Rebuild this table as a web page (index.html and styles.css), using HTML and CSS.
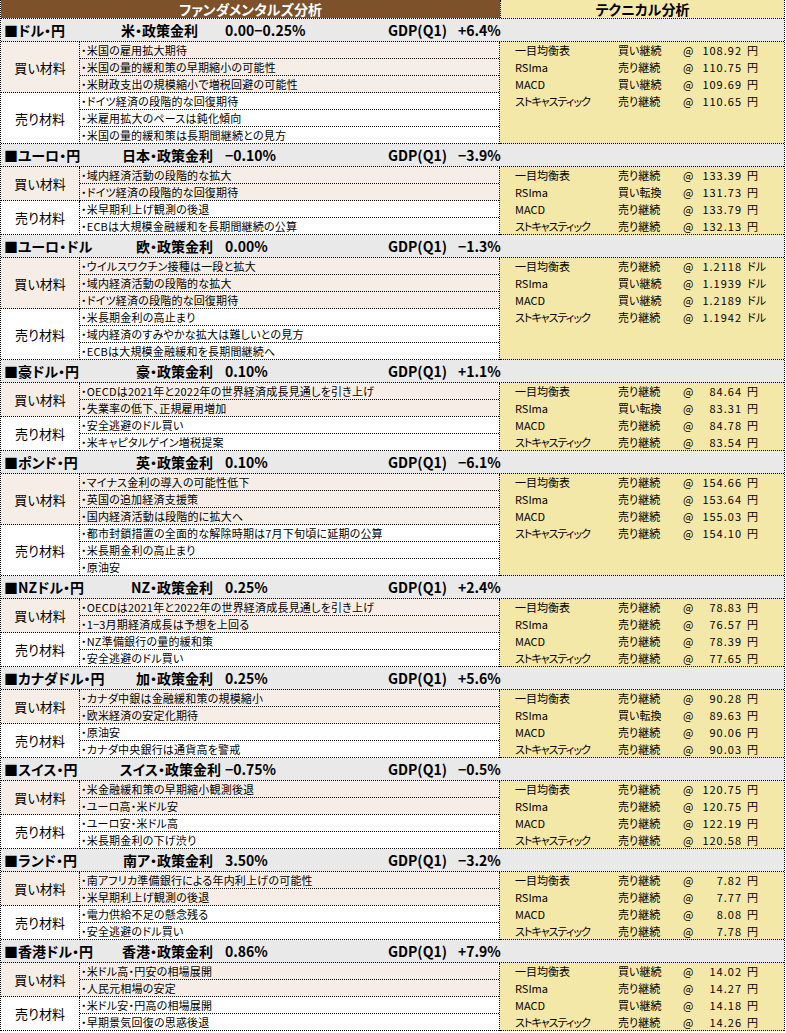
FILE: index.html
```html
<!DOCTYPE html>
<html lang="ja">
<head>
<meta charset="utf-8">
<title>ファンダメンタルズ分析</title>
<link rel="stylesheet" href="styles.css">
</head>
<body>
<div class="sheet">
  <div class="title">
    <div class="t-fund">ファンダメンタルズ分析</div>
    <div class="t-tech">テクニカル分析</div>
  </div>

  <section class="pair">
    <div class="phead"><span class="pname">■ドル・円</span><span class="rlabel rlabel-short">米・政策金利</span><span class="rate">0.00−0.25%</span><span class="gdp">GDP(Q1)</span><span class="gdpv">+6.4%</span></div>
    <div class="pbody">
      <div class="fund">
        <div class="grp buy"><div class="glabel">買い材料</div><div class="items">
          <div class="item">・米国の雇用拡大期待</div>
          <div class="item">・米国の量的緩和策の早期縮小の可能性</div>
          <div class="item">・米財政支出の規模縮小で増税回避の可能性</div>
        </div></div>
        <div class="grp sell"><div class="glabel">売り材料</div><div class="items">
          <div class="item">・ドイツ経済の段階的な回復期待</div>
          <div class="item">・米雇用拡大のペースは鈍化傾向</div>
          <div class="item">・米国の量的緩和策は長期間継続との見方</div>
        </div></div>
      </div>
      <div class="tech">
        <div class="trow"><span>一目均衡表</span><span>買い継続</span><span>@</span><span class="tval">108.92</span><span class="tunit">円</span></div>
        <div class="trow"><span>RSIma</span><span>売り継続</span><span>@</span><span class="tval">110.75</span><span class="tunit">円</span></div>
        <div class="trow"><span>MACD</span><span>買い継続</span><span>@</span><span class="tval">109.69</span><span class="tunit">円</span></div>
        <div class="trow"><span class="kana">ストキャスティック</span><span>売り継続</span><span>@</span><span class="tval">110.65</span><span class="tunit">円</span></div>
      </div>
    </div>
  </section>

  <section class="pair">
    <div class="phead"><span class="pname">■ユーロ・円</span><span class="rlabel">日本・政策金利</span><span class="rate">−0.10%</span><span class="gdp">GDP(Q1)</span><span class="gdpv">−3.9%</span></div>
    <div class="pbody">
      <div class="fund">
        <div class="grp buy"><div class="glabel">買い材料</div><div class="items">
          <div class="item">・域内経済活動の段階的な拡大</div>
          <div class="item">・ドイツ経済の段階的な回復期待</div>
        </div></div>
        <div class="grp sell"><div class="glabel">売り材料</div><div class="items">
          <div class="item">・米早期利上げ観測の後退</div>
          <div class="item">・ECBは大規模金融緩和を長期間継続の公算</div>
        </div></div>
      </div>
      <div class="tech">
        <div class="trow"><span>一目均衡表</span><span>売り継続</span><span>@</span><span class="tval">133.39</span><span class="tunit">円</span></div>
        <div class="trow"><span>RSIma</span><span>買い転換</span><span>@</span><span class="tval">131.73</span><span class="tunit">円</span></div>
        <div class="trow"><span>MACD</span><span>売り継続</span><span>@</span><span class="tval">133.79</span><span class="tunit">円</span></div>
        <div class="trow"><span class="kana">ストキャスティック</span><span>売り継続</span><span>@</span><span class="tval">132.13</span><span class="tunit">円</span></div>
      </div>
    </div>
  </section>

  <section class="pair">
    <div class="phead"><span class="pname">■ユーロ・ドル</span><span class="rlabel">欧・政策金利</span><span class="rate">0.00%</span><span class="gdp">GDP(Q1)</span><span class="gdpv">−1.3%</span></div>
    <div class="pbody">
      <div class="fund">
        <div class="grp buy"><div class="glabel">買い材料</div><div class="items">
          <div class="item">・ウイルスワクチン接種は一段と拡大</div>
          <div class="item">・域内経済活動の段階的な拡大</div>
          <div class="item">・ドイツ経済の段階的な回復期待</div>
        </div></div>
        <div class="grp sell"><div class="glabel">売り材料</div><div class="items">
          <div class="item">・米長期金利の高止まり</div>
          <div class="item">・域内経済のすみやかな拡大は難しいとの見方</div>
          <div class="item">・ECBは大規模金融緩和を長期間継続へ</div>
        </div></div>
      </div>
      <div class="tech">
        <div class="trow"><span>一目均衡表</span><span>売り継続</span><span>@</span><span class="tval">1.2118</span><span class="tunit">ドル</span></div>
        <div class="trow"><span>RSIma</span><span>買い継続</span><span>@</span><span class="tval">1.1939</span><span class="tunit">ドル</span></div>
        <div class="trow"><span>MACD</span><span>買い継続</span><span>@</span><span class="tval">1.2189</span><span class="tunit">ドル</span></div>
        <div class="trow"><span class="kana">ストキャスティック</span><span>売り継続</span><span>@</span><span class="tval">1.1942</span><span class="tunit">ドル</span></div>
      </div>
    </div>
  </section>

  <section class="pair">
    <div class="phead"><span class="pname">■豪ドル・円</span><span class="rlabel">豪・政策金利</span><span class="rate">0.10%</span><span class="gdp">GDP(Q1)</span><span class="gdpv">+1.1%</span></div>
    <div class="pbody">
      <div class="fund">
        <div class="grp buy"><div class="glabel">買い材料</div><div class="items">
          <div class="item">・OECDは2021年と2022年の世界経済成長見通しを引き上げ</div>
          <div class="item">・失業率の低下、正規雇用増加</div>
        </div></div>
        <div class="grp sell"><div class="glabel">売り材料</div><div class="items">
          <div class="item">・安全逃避のドル買い</div>
          <div class="item">・米キャピタルゲイン増税提案</div>
        </div></div>
      </div>
      <div class="tech">
        <div class="trow"><span>一目均衡表</span><span>売り継続</span><span>@</span><span class="tval">84.64</span><span class="tunit">円</span></div>
        <div class="trow"><span>RSIma</span><span>買い転換</span><span>@</span><span class="tval">83.31</span><span class="tunit">円</span></div>
        <div class="trow"><span>MACD</span><span>売り継続</span><span>@</span><span class="tval">84.78</span><span class="tunit">円</span></div>
        <div class="trow"><span class="kana">ストキャスティック</span><span>売り継続</span><span>@</span><span class="tval">83.54</span><span class="tunit">円</span></div>
      </div>
    </div>
  </section>

  <section class="pair">
    <div class="phead"><span class="pname">■ポンド・円</span><span class="rlabel">英・政策金利</span><span class="rate">0.10%</span><span class="gdp">GDP(Q1)</span><span class="gdpv">−6.1%</span></div>
    <div class="pbody">
      <div class="fund">
        <div class="grp buy"><div class="glabel">買い材料</div><div class="items">
          <div class="item">・マイナス金利の導入の可能性低下</div>
          <div class="item">・英国の追加経済支援策</div>
          <div class="item">・国内経済活動は段階的に拡大へ</div>
        </div></div>
        <div class="grp sell"><div class="glabel">売り材料</div><div class="items">
          <div class="item">・都市封鎖措置の全面的な解除時期は7月下旬頃に延期の公算</div>
          <div class="item">・米長期金利の高止まり</div>
          <div class="item">・原油安</div>
        </div></div>
      </div>
      <div class="tech">
        <div class="trow"><span>一目均衡表</span><span>売り継続</span><span>@</span><span class="tval">154.66</span><span class="tunit">円</span></div>
        <div class="trow"><span>RSIma</span><span>売り継続</span><span>@</span><span class="tval">153.64</span><span class="tunit">円</span></div>
        <div class="trow"><span>MACD</span><span>売り継続</span><span>@</span><span class="tval">155.03</span><span class="tunit">円</span></div>
        <div class="trow"><span class="kana">ストキャスティック</span><span>売り継続</span><span>@</span><span class="tval">154.10</span><span class="tunit">円</span></div>
      </div>
    </div>
  </section>

  <section class="pair">
    <div class="phead"><span class="pname">■NZドル・円</span><span class="rlabel">NZ・政策金利</span><span class="rate">0.25%</span><span class="gdp">GDP(Q1)</span><span class="gdpv">+2.4%</span></div>
    <div class="pbody">
      <div class="fund">
        <div class="grp buy"><div class="glabel">買い材料</div><div class="items">
          <div class="item">・OECDは2021年と2022年の世界経済成長見通しを引き上げ</div>
          <div class="item">・1−3月期経済成長は予想を上回る</div>
        </div></div>
        <div class="grp sell"><div class="glabel">売り材料</div><div class="items">
          <div class="item">・NZ準備銀行の量的緩和策</div>
          <div class="item">・安全逃避のドル買い</div>
        </div></div>
      </div>
      <div class="tech">
        <div class="trow"><span>一目均衡表</span><span>売り継続</span><span>@</span><span class="tval">78.83</span><span class="tunit">円</span></div>
        <div class="trow"><span>RSIma</span><span>売り継続</span><span>@</span><span class="tval">76.57</span><span class="tunit">円</span></div>
        <div class="trow"><span>MACD</span><span>売り継続</span><span>@</span><span class="tval">78.39</span><span class="tunit">円</span></div>
        <div class="trow"><span class="kana">ストキャスティック</span><span>売り継続</span><span>@</span><span class="tval">77.65</span><span class="tunit">円</span></div>
      </div>
    </div>
  </section>

  <section class="pair">
    <div class="phead"><span class="pname">■カナダドル・円</span><span class="rlabel">加・政策金利</span><span class="rate">0.25%</span><span class="gdp">GDP(Q1)</span><span class="gdpv">+5.6%</span></div>
    <div class="pbody">
      <div class="fund">
        <div class="grp buy"><div class="glabel">買い材料</div><div class="items">
          <div class="item">・カナダ中銀は金融緩和策の規模縮小</div>
          <div class="item">・欧米経済の安定化期待</div>
        </div></div>
        <div class="grp sell"><div class="glabel">売り材料</div><div class="items">
          <div class="item">・原油安</div>
          <div class="item">・カナダ中央銀行は通貨高を警戒</div>
        </div></div>
      </div>
      <div class="tech">
        <div class="trow"><span>一目均衡表</span><span>売り継続</span><span>@</span><span class="tval">90.28</span><span class="tunit">円</span></div>
        <div class="trow"><span>RSIma</span><span>買い転換</span><span>@</span><span class="tval">89.63</span><span class="tunit">円</span></div>
        <div class="trow"><span>MACD</span><span>売り継続</span><span>@</span><span class="tval">90.06</span><span class="tunit">円</span></div>
        <div class="trow"><span class="kana">ストキャスティック</span><span>売り継続</span><span>@</span><span class="tval">90.03</span><span class="tunit">円</span></div>
      </div>
    </div>
  </section>

  <section class="pair">
    <div class="phead"><span class="pname">■スイス・円</span><span class="rlabel rlabel-long">スイス・政策金利</span><span class="rate rate-near">−0.75%</span><span class="gdp">GDP(Q1)</span><span class="gdpv">−0.5%</span></div>
    <div class="pbody">
      <div class="fund">
        <div class="grp buy"><div class="glabel">買い材料</div><div class="items">
          <div class="item">・米金融緩和策の早期縮小観測後退</div>
          <div class="item">・ユーロ高・米ドル安</div>
        </div></div>
        <div class="grp sell"><div class="glabel">売り材料</div><div class="items">
          <div class="item">・ユーロ安・米ドル高</div>
          <div class="item">・米長期金利の下げ渋り</div>
        </div></div>
      </div>
      <div class="tech">
        <div class="trow"><span>一目均衡表</span><span>売り継続</span><span>@</span><span class="tval">120.75</span><span class="tunit">円</span></div>
        <div class="trow"><span>RSIma</span><span>売り継続</span><span>@</span><span class="tval">120.75</span><span class="tunit">円</span></div>
        <div class="trow"><span>MACD</span><span>売り継続</span><span>@</span><span class="tval">122.19</span><span class="tunit">円</span></div>
        <div class="trow"><span class="kana">ストキャスティック</span><span>売り継続</span><span>@</span><span class="tval">120.58</span><span class="tunit">円</span></div>
      </div>
    </div>
  </section>

  <section class="pair">
    <div class="phead"><span class="pname">■ランド・円</span><span class="rlabel">南ア・政策金利</span><span class="rate">3.50%</span><span class="gdp">GDP(Q1)</span><span class="gdpv">−3.2%</span></div>
    <div class="pbody">
      <div class="fund">
        <div class="grp buy"><div class="glabel">買い材料</div><div class="items">
          <div class="item">・南アフリカ準備銀行による年内利上げの可能性</div>
          <div class="item">・米早期利上げ観測の後退</div>
        </div></div>
        <div class="grp sell"><div class="glabel">売り材料</div><div class="items">
          <div class="item">・電力供給不足の懸念残る</div>
          <div class="item">・安全逃避のドル買い</div>
        </div></div>
      </div>
      <div class="tech">
        <div class="trow"><span>一目均衡表</span><span>売り継続</span><span>@</span><span class="tval">7.82</span><span class="tunit">円</span></div>
        <div class="trow"><span>RSIma</span><span>売り継続</span><span>@</span><span class="tval">7.77</span><span class="tunit">円</span></div>
        <div class="trow"><span>MACD</span><span>売り継続</span><span>@</span><span class="tval">8.08</span><span class="tunit">円</span></div>
        <div class="trow"><span class="kana">ストキャスティック</span><span>売り継続</span><span>@</span><span class="tval">7.78</span><span class="tunit">円</span></div>
      </div>
    </div>
  </section>

  <section class="pair">
    <div class="phead"><span class="pname">■香港ドル・円</span><span class="rlabel">香港・政策金利</span><span class="rate">0.86%</span><span class="gdp">GDP(Q1)</span><span class="gdpv">+7.9%</span></div>
    <div class="pbody">
      <div class="fund">
        <div class="grp buy"><div class="glabel">買い材料</div><div class="items">
          <div class="item">・米ドル高・円安の相場展開</div>
          <div class="item">・人民元相場の安定</div>
        </div></div>
        <div class="grp sell"><div class="glabel">売り材料</div><div class="items">
          <div class="item">・米ドル安・円高の相場展開</div>
          <div class="item">・早期景気回復の思惑後退</div>
        </div></div>
      </div>
      <div class="tech">
        <div class="trow"><span>一目均衡表</span><span>買い継続</span><span>@</span><span class="tval">14.02</span><span class="tunit">円</span></div>
        <div class="trow"><span>RSIma</span><span>売り継続</span><span>@</span><span class="tval">14.27</span><span class="tunit">円</span></div>
        <div class="trow"><span>MACD</span><span>買い継続</span><span>@</span><span class="tval">14.18</span><span class="tunit">円</span></div>
        <div class="trow"><span class="kana">ストキャスティック</span><span>売り継続</span><span>@</span><span class="tval">14.26</span><span class="tunit">円</span></div>
      </div>
    </div>
  </section>
</div>
</body>
</html>
```

FILE: styles.css
```css
* { box-sizing: border-box; }

body {
  margin: 0;
  background: #ffffff;
  font-family: "Noto Sans CJK JP", "Liberation Sans", sans-serif;
  font-feature-settings: "palt";
  color: #000;
}

.sheet {
  width: 785px;
  border-left: 1px dotted #000;
  border-right: 1px dotted #000;
}

.title {
  display: grid;
  grid-template-columns: 499px 1fr;
  height: 19px;
  border-bottom: 1px dotted #000;
  font-size: 14px;
  font-weight: bold;
  line-height: 18px;
  text-align: center;
}

.t-fund {
  background: #7d5129;
  color: #fff;
}

.t-tech {
  background: #f4e8a8;
  border-left: 1px dotted #000;
  color: #000;
}

.phead {
  display: grid;
  grid-template-columns: 116px 105px 163px 70px 1fr;
  height: 23px;
  background: #e9e9e9;
  border-bottom: 1px dotted #000;
  font-size: 14px;
  font-weight: bold;
  line-height: 22px;
  white-space: nowrap;
  padding-left: 3px;
}

.rlabel {
  justify-self: end;
  padding-right: 12px;
}

.rlabel-short { padding-right: 27px; }
.rlabel-long { padding-right: 4px; }

.pbody {
  display: grid;
  grid-template-columns: 499px 1fr;
}

.fund {
  display: flex;
  flex-direction: column;
  border-right: 1px dotted #000;
}

.grp {
  display: grid;
  grid-template-columns: 79px 1fr;
}

.buy { background: #f6eee6; }
.sell { background: #ffffff; }

.glabel {
  display: flex;
  align-items: center;
  justify-content: center;
  border-right: 1px dotted #000;
  border-bottom: 1px dotted #000;
  font-size: 13px;
}

.items {
  display: flex;
  flex-direction: column;
}

.item {
  height: 17px;
  border-bottom: 1px dotted #000;
  font-size: 11px;
  line-height: 16px;
  white-space: nowrap;
  letter-spacing: 0.2px;
  padding-left: 1px;
}

.tech {
  background: #f4e8a8;
  border-bottom: 1px dotted #000;
  padding-left: 15px;
}

.trow {
  display: grid;
  grid-template-columns: 103px 65px 18px 40px auto;
  height: 17px;
  font-size: 11px;
  line-height: 16px;
  white-space: nowrap;
}

.trow:last-child { height: 16px; }

.kana { letter-spacing: -1px; }

.tval {
  justify-self: end;
  letter-spacing: 1px;
  margin-right: -1px;
}

.tunit { padding-left: 6px; }
```
